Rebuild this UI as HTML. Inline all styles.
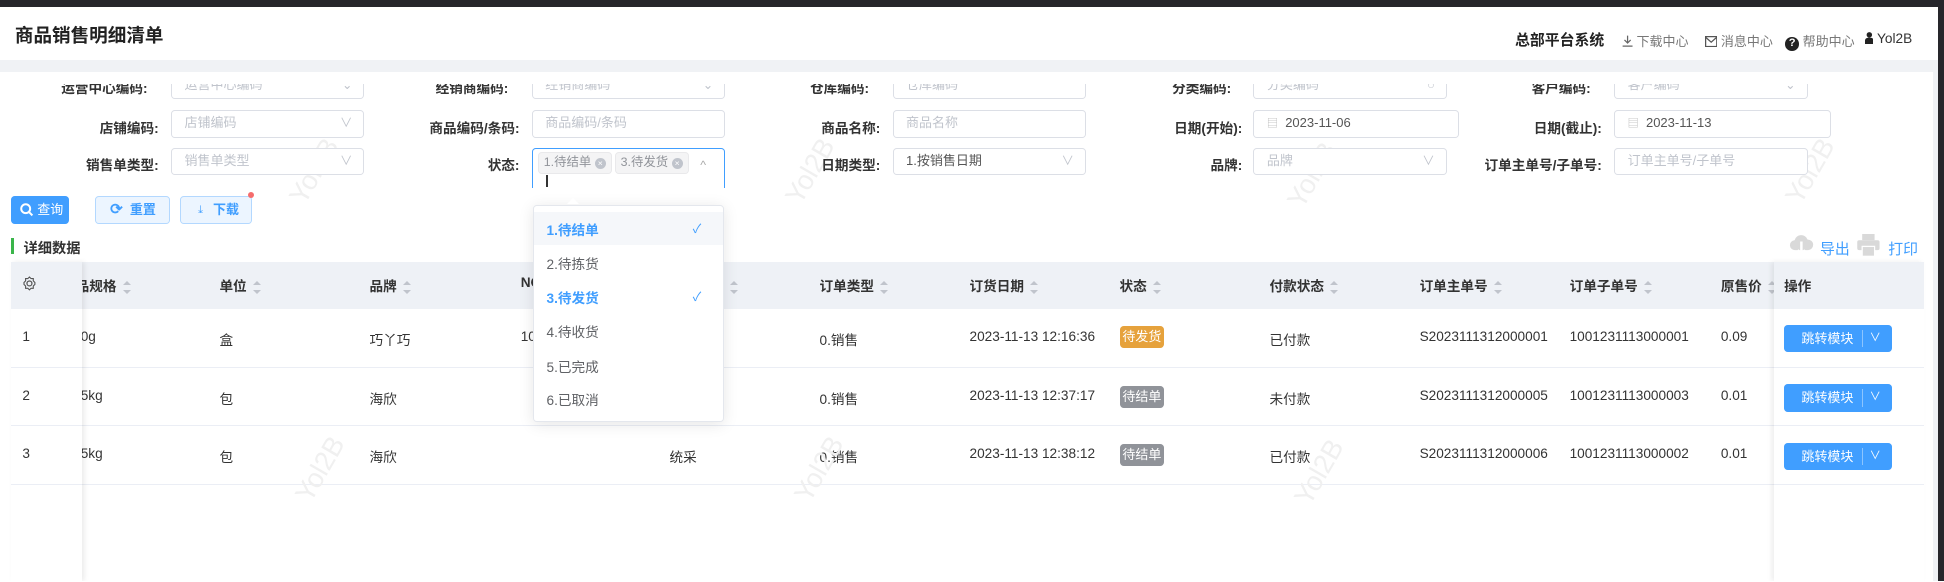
<!DOCTYPE html>
<html><head><meta charset="utf-8">
<style>
html,body{margin:0;padding:0;width:1944px;height:582px;overflow:hidden;background:#fff;}
#w{zoom:1.2398;position:relative;width:1568px;height:469px;overflow:hidden;font-family:"Liberation Sans","Noto Sans CJK SC",sans-serif;font-size:11px;color:#333;background:#fff;}
.a{position:absolute;white-space:nowrap;}
.lbl{position:absolute;font-weight:bold;color:#333;text-align:right;white-space:nowrap;}
.inp{position:absolute;border:1px solid #dcdfe6;border-radius:3px;background:#fff;box-sizing:border-box;height:22px;color:#c0c4cc;font-size:10.5px;line-height:20px;padding-left:10px;white-space:nowrap;}
.inp .ar{position:absolute;right:9px;top:0;color:#c0c4cc;font-size:10px;}
.th{position:absolute;top:222px;font-weight:bold;color:#333;white-space:nowrap;}
.srt{display:inline-block;vertical-align:middle;margin-left:5px;width:7px;height:11px;position:relative;}
.srt:before{content:"";position:absolute;left:0;top:0;border:3.5px solid transparent;border-bottom:4px solid #c0c4cc;border-top:0;}
.srt:after{content:"";position:absolute;left:0;bottom:0;border:3.5px solid transparent;border-top:4px solid #c0c4cc;border-bottom:0;}
.td{position:absolute;white-space:nowrap;color:#333;}
.tag{position:absolute;left:903px;width:36px;height:18px;border-radius:3px;color:#fff;font-size:10.5px;line-height:18px;text-align:center;}
.jb{position:absolute;left:1439px;width:87px;height:22px;background:#409eff;border-radius:3px;color:#fff;font-size:10.5px;line-height:22px;}
.jb span{position:absolute;left:14px;}
.jb i{position:absolute;left:63px;top:4px;height:14px;border-left:1px solid #8cc5ff;}
.jb b{position:absolute;left:69px;top:0;font-weight:normal;font-size:9px;}
.wm{position:absolute;color:#f0f0f0;font-size:22px;transform:rotate(-60deg);white-space:nowrap;}
.dd{position:absolute;left:10px;font-size:11px;color:#606266;}
</style></head><body><div id="w">
<div class="a" style="left:0;top:0;width:1568px;height:6px;background:#26262b;"></div>
<div class="a" style="left:1563px;top:0;width:5px;height:469px;background:#26262b;"></div>
<div class="a" style="left:12px;top:17px;font-size:15px;font-weight:bold;color:#222;">商品销售明细清单</div>
<div class="a" style="left:1222px;top:23px;font-size:12px;font-weight:bold;color:#222;">总部平台系统</div>
<div class="a" style="left:1308px;top:25px;color:#777;font-size:10.5px;"><svg width="9" height="10" viewBox="0 0 9 10" style="vertical-align:-1px;margin-right:3px"><path d="M4.5 0.5v6M2 4l2.5 2.5L7 4M0.5 9h8" stroke="#666" fill="none" stroke-width="1"/></svg>下载中心</div>
<div class="a" style="left:1375px;top:25px;color:#777;font-size:10.5px;"><svg width="10" height="9" viewBox="0 0 10 9" style="vertical-align:-1px;margin-right:3px"><rect x="0.5" y="0.5" width="9" height="8" fill="none" stroke="#555"/><path d="M0.5 1l4.5 4 4.5-4" fill="none" stroke="#555"/></svg>消息中心</div>
<div class="a" style="left:1440px;top:25px;color:#777;font-size:10.5px;"><span style="display:inline-block;width:11px;height:11px;border-radius:50%;background:#222;color:#fff;font-size:9px;line-height:11px;text-align:center;font-weight:bold;margin-right:3px;">?</span>帮助中心</div>
<div class="a" style="left:1504px;top:25px;color:#333;font-size:11px;"><svg width="7" height="10" viewBox="0 0 7 10" style="vertical-align:-1px;margin-right:3px"><circle cx="3.5" cy="2.3" r="2.2" fill="#222"/><path d="M0 10V7c0-1.5 1-2.5 3.5-2.5S7 5.5 7 7v3z" fill="#222"/></svg>Yol2B</div>
<div class="a" style="left:0;top:48px;width:1563px;height:10px;background:#f0f2f5;"></div>
<div class="a" style="left:1559px;top:57px;width:4px;height:412px;background:#f0f2f5;"></div>
<div class="wm" style="left:225px;top:125px;">Yol2B</div>
<div class="wm" style="left:625px;top:125px;">Yol2B</div>
<div class="wm" style="left:1030px;top:128px;">Yol2B</div>
<div class="wm" style="left:1432px;top:125px;">Yol2B</div>
<!-- form row 1 clipped -->
<div class="a" style="left:0;top:68px;width:1559px;height:14px;overflow:hidden;">
 <div class="lbl" style="right:1440px;top:-6px;">运营中心编码:</div>
 <div class="inp" style="left:138px;top:-10px;width:156px;">运营中心编码<span class="ar">⌄</span></div>
 <div class="lbl" style="right:1149px;top:-6px;">经销商编码:</div>
 <div class="inp" style="left:429px;top:-10px;width:156px;">经销商编码<span class="ar">⌄</span></div>
 <div class="lbl" style="right:858px;top:-6px;">仓库编码:</div>
 <div class="inp" style="left:720px;top:-10px;width:156px;">仓库编码</div>
 <div class="lbl" style="right:566px;top:-6px;">分类编码:</div>
 <div class="inp" style="left:1011px;top:-10px;width:156px;">分类编码<span class="ar">○</span></div>
 <div class="lbl" style="right:276px;top:-6px;">客户编码:</div>
 <div class="inp" style="left:1302px;top:-10px;width:156px;">客户编码<span class="ar">⌄</span></div>
</div>
<div class="lbl" style="right:1440px;top:94px;">店铺编码:</div>
<div class="inp" style="left:138px;top:89px;width:156px;">店铺编码<span class="ar">∨</span></div>
<div class="lbl" style="right:1149px;top:94px;">商品编码/条码:</div>
<div class="inp" style="left:429px;top:89px;width:156px;">商品编码/条码</div>
<div class="lbl" style="right:858px;top:94px;">商品名称:</div>
<div class="inp" style="left:720px;top:89px;width:156px;">商品名称</div>
<div class="lbl" style="right:566px;top:94px;">日期(开始):</div>
<div class="inp" style="left:1011px;top:89px;width:166px;color:#555;padding-left:10px;"><span style="color:#bbb;font-size:9px;">▤</span>&nbsp;&nbsp;2023-11-06</div>
<div class="lbl" style="right:276px;top:94px;">日期(截止):</div>
<div class="inp" style="left:1302px;top:89px;width:175px;color:#555;padding-left:10px;"><span style="color:#bbb;font-size:9px;">▤</span>&nbsp;&nbsp;2023-11-13</div>
<div class="lbl" style="right:1440px;top:124px;">销售单类型:</div>
<div class="inp" style="left:138px;top:119px;width:156px;">销售单类型<span class="ar">∨</span></div>
<div class="lbl" style="right:1149px;top:124px;">状态:</div>
<div class="a" style="left:429px;top:119px;width:156px;height:33px;border:1px solid #409eff;border-bottom:0;border-radius:3px 3px 0 0;box-sizing:border-box;background:#fff;">
 <div class="a" style="left:4px;top:3px;height:16px;padding:0 4px;background:#f4f4f5;border:1px solid #e9e9eb;border-radius:3px;color:#909399;font-size:10px;line-height:16px;">1.待结单 <span style="display:inline-block;width:9px;height:9px;border-radius:50%;background:#c0c4cc;color:#fff;font-size:7px;line-height:9px;text-align:center;">×</span></div>
 <div class="a" style="left:66px;top:3px;height:16px;padding:0 4px;background:#f4f4f5;border:1px solid #e9e9eb;border-radius:3px;color:#909399;font-size:10px;line-height:16px;">3.待发货 <span style="display:inline-block;width:9px;height:9px;border-radius:50%;background:#c0c4cc;color:#fff;font-size:7px;line-height:9px;text-align:center;">×</span></div>
 <div class="a" style="left:11px;top:21px;width:1px;height:10px;background:#333;"></div>
 <div class="a" style="left:135px;top:8px;color:#aaa;font-size:10px;">^</div>
</div>
<div class="lbl" style="right:858px;top:124px;">日期类型:</div>
<div class="inp" style="left:720px;top:119px;width:156px;color:#555;">1.按销售日期<span class="ar">∨</span></div>
<div class="lbl" style="right:566px;top:124px;">品牌:</div>
<div class="inp" style="left:1011px;top:119px;width:156px;">品牌<span class="ar">∨</span></div>
<div class="lbl" style="right:276px;top:124px;">订单主单号/子单号:</div>
<div class="inp" style="left:1302px;top:119px;width:156px;">订单主单号/子单号</div>
<div class="a" style="left:9px;top:158px;width:47px;height:23px;background:#409eff;border-radius:3px;color:#fff;font-size:10.5px;line-height:23px;"><svg width="11" height="11" viewBox="0 0 11 11" style="position:absolute;left:7px;top:6px"><circle cx="4.6" cy="4.6" r="3.6" fill="none" stroke="#fff" stroke-width="1.6"/><path d="M7.3 7.3L10 10" stroke="#fff" stroke-width="1.6"/></svg><span style="position:absolute;left:21px;">查询</span></div>
<div class="a" style="left:77px;top:158px;width:60px;height:23px;background:#ecf5ff;border:1px solid #b3d8ff;box-sizing:border-box;border-radius:3px;color:#409eff;font-size:10.5px;line-height:21px;font-weight:bold;"><span style="position:absolute;left:11px;font-size:12px;">⟳</span><span style="position:absolute;left:27px;">重置</span></div>
<div class="a" style="left:145px;top:158px;width:58px;height:23px;background:#ecf5ff;border:1px solid #b3d8ff;box-sizing:border-box;border-radius:3px;color:#409eff;font-size:10.5px;line-height:21px;"><span style="position:absolute;left:14px;font-size:9px;">⤓</span><span style="position:absolute;left:26px;font-weight:bold;">下载</span></div>
<div class="a" style="left:200px;top:155px;width:5px;height:5px;border-radius:50%;background:#f56c6c;"></div>
<div class="a" style="left:9px;top:192px;width:2px;height:13px;background:#3ab54a;"></div>
<div class="a" style="left:19px;top:191px;font-size:11.5px;font-weight:bold;color:#333;">详细数据</div>
<div class="a" style="left:1443px;top:189px;"><svg width="20" height="18" viewBox="0 0 20 18"><path d="M5 13a4 4 0 0 1-.5-8A5.5 5.5 0 0 1 15 4.5 4 4 0 0 1 15.5 13z" fill="#d9d9d9"/><path d="M10 6v10M7 13l3 3 3-3" stroke="#fff" stroke-width="2" fill="none"/></svg></div>
<div class="a" style="left:1468px;top:192px;color:#409eff;font-size:12px;">导出</div>
<div class="a" style="left:1497px;top:189px;"><svg width="20" height="18" viewBox="0 0 20 18"><rect x="5" y="0" width="10" height="5" fill="#d9d9d9"/><rect x="1" y="5" width="18" height="8" rx="1.5" fill="#d9d9d9"/><rect x="5" y="10" width="10" height="8" fill="#d9d9d9" stroke="#fff"/></svg></div>
<div class="a" style="left:1523px;top:192px;color:#409eff;font-size:12px;">打印</div>
<div class="a" style="left:9px;top:211px;width:1543px;height:38px;background:#eef1f6;"></div>
<div class="a" style="left:9px;top:296px;width:1543px;height:1px;background:#ebeef5;"></div>
<div class="a" style="left:9px;top:343px;width:1543px;height:1px;background:#ebeef5;"></div>
<div class="a" style="left:9px;top:390px;width:1543px;height:1px;background:#ebeef5;"></div>
<div class="th" style="left:50px;">商品规格<span class="srt"></span></div>
<div class="th" style="left:177px;">单位<span class="srt"></span></div>
<div class="th" style="left:298px;">品牌<span class="srt"></span></div>
<div class="th" style="left:420px;">NO.<span class="srt"></span></div>
<div class="th" style="left:540px;">采购类型<span class="srt"></span></div>
<div class="th" style="left:661px;">订单类型<span class="srt"></span></div>
<div class="th" style="left:782px;">订货日期<span class="srt"></span></div>
<div class="th" style="left:903px;">状态<span class="srt"></span></div>
<div class="th" style="left:1024px;">付款状态<span class="srt"></span></div>
<div class="th" style="left:1145px;">订单主单号<span class="srt"></span></div>
<div class="th" style="left:1266px;">订单子单号<span class="srt"></span></div>
<div class="th" style="left:1388px;">原售价<span class="srt"></span></div>
<div class="td" style="left:59px;top:265px;">30g</div><div class="td" style="left:177px;top:265px;">盒</div><div class="td" style="left:298px;top:265px;">巧丫巧</div><div class="td" style="left:420px;top:265px;">100012</div>
<div class="td" style="left:661px;top:265px;">0.销售</div><div class="td" style="left:782px;top:265px;">2023-11-13 12:16:36</div>
<div class="tag" style="top:263px;background:#e6a23c;">待发货</div>
<div class="td" style="left:1024px;top:265px;">已付款</div><div class="td" style="left:1145px;top:265px;">S2023111312000001</div><div class="td" style="left:1266px;top:265px;">1001231113000001</div><div class="td" style="left:1388px;top:265px;">0.09</div>
<div class="td" style="left:59px;top:313px;">25kg</div><div class="td" style="left:177px;top:313px;">包</div><div class="td" style="left:298px;top:313px;">海欣</div>
<div class="td" style="left:661px;top:313px;">0.销售</div><div class="td" style="left:782px;top:313px;">2023-11-13 12:37:17</div>
<div class="tag" style="top:311px;background:#909399;">待结单</div>
<div class="td" style="left:1024px;top:313px;">未付款</div><div class="td" style="left:1145px;top:313px;">S2023111312000005</div><div class="td" style="left:1266px;top:313px;">1001231113000003</div><div class="td" style="left:1388px;top:313px;">0.01</div>
<div class="td" style="left:59px;top:360px;">25kg</div><div class="td" style="left:177px;top:360px;">包</div><div class="td" style="left:298px;top:360px;">海欣</div><div class="td" style="left:540px;top:360px;">统采</div>
<div class="td" style="left:661px;top:360px;">0.销售</div><div class="td" style="left:782px;top:360px;">2023-11-13 12:38:12</div>
<div class="tag" style="top:358px;background:#909399;">待结单</div>
<div class="td" style="left:1024px;top:360px;">已付款</div><div class="td" style="left:1145px;top:360px;">S2023111312000006</div><div class="td" style="left:1266px;top:360px;">1001231113000002</div><div class="td" style="left:1388px;top:360px;">0.01</div>
<div class="wm" style="left:230px;top:365px;">Yol2B</div>
<div class="wm" style="left:632px;top:365px;">Yol2B</div>
<div class="wm" style="left:1036px;top:368px;">Yol2B</div>
<div class="a" style="left:9px;top:211px;width:57px;height:258px;background:#fff;box-shadow:2px 0 4px rgba(0,0,0,0.08);"></div>
<div class="a" style="left:9px;top:211px;width:57px;height:38px;background:#eef1f6;"></div>
<div class="a" style="left:9px;top:296px;width:57px;height:1px;background:#ebeef5;"></div>
<div class="a" style="left:9px;top:343px;width:57px;height:1px;background:#ebeef5;"></div>
<div class="a" style="left:9px;top:390px;width:57px;height:1px;background:#ebeef5;"></div>
<div class="a" style="left:18px;top:223px;"><svg width="12" height="12" viewBox="0 0 12 12"><circle cx="6" cy="6" r="2" fill="none" stroke="#555"/><path d="M6 .8l1.3 1.3h1.8v1.8L10.4 5.2v1.6L9.1 8.1v1.8H7.3L6 11.2 4.7 9.9H2.9V8.1L1.6 6.8V5.2l1.3-1.3V2.1h1.8z" fill="none" stroke="#555" stroke-width=".9"/></svg></div>
<div class="td" style="left:18px;top:265px;">1</div><div class="td" style="left:18px;top:313px;">2</div><div class="td" style="left:18px;top:360px;">3</div>
<div class="a" style="left:1431px;top:211px;width:121px;height:258px;background:#fff;box-shadow:-2px 0 4px rgba(0,0,0,0.07);"></div>
<div class="a" style="left:1431px;top:211px;width:121px;height:38px;background:#eef1f6;"></div>
<div class="a" style="left:1431px;top:296px;width:121px;height:1px;background:#ebeef5;"></div>
<div class="a" style="left:1431px;top:343px;width:121px;height:1px;background:#ebeef5;"></div>
<div class="a" style="left:1431px;top:390px;width:121px;height:1px;background:#ebeef5;"></div>
<div class="th" style="left:1439px;">操作</div>
<div class="jb" style="top:262px;"><span>跳转模块</span><i></i><b>∨</b></div>
<div class="jb" style="top:310px;"><span>跳转模块</span><i></i><b>∨</b></div>
<div class="jb" style="top:357px;"><span>跳转模块</span><i></i><b>∨</b></div>
<div class="a" style="left:430px;top:165px;width:154px;height:175px;background:#fff;border:1px solid #e4e7ed;border-radius:3px;box-sizing:border-box;box-shadow:0 2px 12px rgba(0,0,0,0.1);">
 <div class="a" style="left:0;top:5px;width:152px;height:27px;background:#f5f7fa;"></div>
 <div class="dd" style="top:11px;color:#409eff;font-weight:bold;">1.待结单</div><div class="a" style="left:128px;top:11px;color:#409eff;font-size:10px;">✓</div>
 <div class="dd" style="top:38px;">2.待拣货</div>
 <div class="dd" style="top:66px;color:#409eff;font-weight:bold;">3.待发货</div><div class="a" style="left:128px;top:66px;color:#409eff;font-size:10px;">✓</div>
 <div class="dd" style="top:93px;">4.待收货</div>
 <div class="dd" style="top:121px;">5.已完成</div>
 <div class="dd" style="top:148px;">6.已取消</div>
</div>
<div class="a" style="left:457px;top:160px;width:0;height:0;border:5px solid transparent;border-bottom:5px solid #fff;border-top:0;"></div>
</div></body></html>
